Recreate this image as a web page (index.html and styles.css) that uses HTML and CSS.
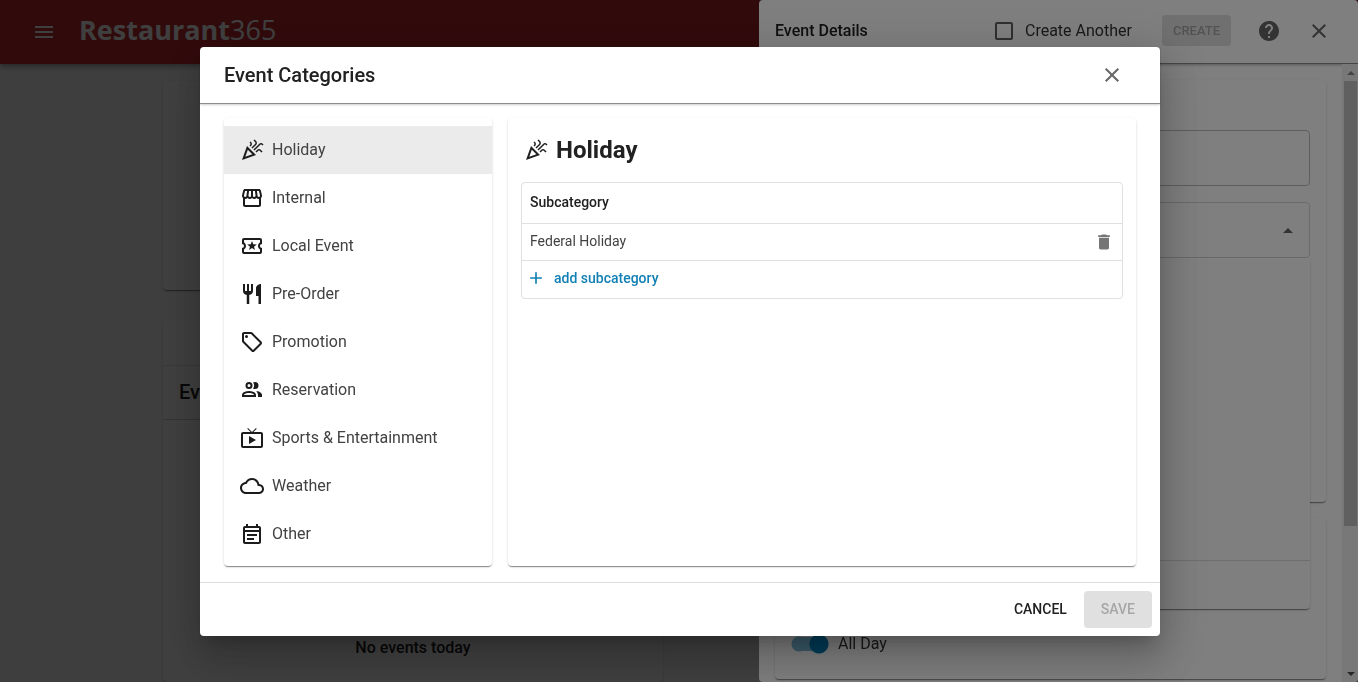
FILE: index.html
```html
<!DOCTYPE html>
<html lang="en">
<head>
<meta charset="utf-8">
<title>Restaurant365 - Event Categories</title>
<link rel="stylesheet" href="styles.css">
</head>
<body>
<svg class="sprite" aria-hidden="true">
  <symbol id="celebration" viewBox="0 0 24 24"><path d="M2 22l14-5-9-9L2 22zm10.35-5.82L5.3 18.7l2.52-7.05 4.53 4.53zM14.53 12.53l5.59-5.59c.49-.49 1.28-.49 1.77 0l.59.59 1.06-1.06-.59-.59c-1.07-1.07-2.82-1.07-3.89 0l-5.59 5.59 1.06 1.06zM10.06 6.88l-.59.59 1.06 1.06.59-.59c1.07-1.07 1.07-2.82 0-3.89l-.59-.59-1.06 1.07.59.59c.48.48.48 1.28 0 1.76zM17.06 11.88l-1.59 1.59 1.06 1.06 1.59-1.59c.49-.49 1.28-.49 1.77 0l1.61 1.61 1.06-1.06-1.61-1.61c-1.08-1.07-2.82-1.07-3.89 0zM15.06 5.88l-3.59 3.59 1.06 1.06 3.59-3.59c1.07-1.07 1.07-2.82 0-3.89l-1.59-1.59-1.06 1.06 1.59 1.59c.48.49.48 1.29 0 1.77z"/></symbol>
  <symbol id="store" viewBox="0 0 24 24"><path d="M21.9 8.89l-1.05-4.37c-.22-.9-1-1.52-1.91-1.52H5.05c-.9 0-1.69.63-1.9 1.52L2.1 8.89c-.24 1.02-.02 2.06.62 2.88.08.11.19.19.28.29V19c0 1.1.9 2 2 2h14c1.1 0 2-.9 2-2v-6.94c.09-.09.2-.18.28-.28.64-.82.87-1.87.62-2.89zm-2.99-3.9l1.05 4.37c.1.42.01.84-.25 1.17-.14.18-.44.47-.94.47-.61 0-1.14-.49-1.21-1.14L16.98 5l1.93-.01zM13 5h1.96l.54 4.52c.05.39-.07.78-.33 1.07-.22.26-.54.41-.95.41-.67 0-1.22-.59-1.22-1.31V5zM8.49 9.52L9.04 5H11v4.69c0 .72-.55 1.31-1.29 1.31-.34 0-.65-.15-.89-.41-.25-.29-.37-.68-.33-1.07zm-4.45-.16L5.05 5h1.97l-.58 4.86c-.08.65-.6 1.14-1.21 1.14-.49 0-.8-.29-.93-.47-.27-.32-.36-.75-.26-1.17zM5 19v-6.03c.08.01.15.03.23.03.87 0 1.66-.36 2.24-.95.6.6 1.4.95 2.31.95.87 0 1.65-.36 2.23-.93.59.57 1.39.93 2.29.93.84 0 1.64-.35 2.24-.95.58.59 1.37.95 2.24.95.08 0 .15-.02.23-.03V19H5z"/></symbol>
  <symbol id="ticket" viewBox="0 0 24 24"><path d="M22 10V6c0-1.11-.9-2-2-2H4c-1.1 0-1.99.89-1.99 2v4c1.1 0 1.99.9 1.99 2s-.89 2-2 2v4c0 1.1.9 2 2 2h16c1.1 0 2-.9 2-2v-4c-1.1 0-2-.9-2-2s.9-2 2-2zm-2-1.46c-1.19.69-2 1.99-2 3.46s.81 2.77 2 3.46V18H4v-2.54c1.19-.69 2-1.99 2-3.46 0-1.48-.8-2.77-1.99-3.46L4 6h16v2.54zM9.07 16L12 14.12 14.93 16l-.89-3.36 2.69-2.2-3.47-.21L12 7l-1.27 3.22-3.47.21 2.69 2.2z"/></symbol>
  <symbol id="utensils" viewBox="0 0 24 24"><path d="M11 9H9V2H7v7H5V2H3v7c0 2.12 1.66 3.84 3.75 3.97V22h2.5v-9.03C11.34 12.84 13 11.12 13 9V2h-2v7zm5-3v8h2.5v8H21V2c-2.76 0-5 2.24-5 4z"/></symbol>
  <symbol id="tag" viewBox="0 0 24 24"><path d="M21.41 11.58l-9-9C12.05 2.22 11.55 2 11 2H4c-1.1 0-2 .9-2 2v7c0 .55.22 1.05.59 1.42l9 9c.36.36.86.58 1.41.58s1.05-.22 1.41-.59l7-7c.37-.36.59-.86.59-1.41s-.23-1.06-.59-1.42zM13 20.01L4 11V4h7v-.01l9 9-7 7.02z"/><circle cx="6.5" cy="6.5" r="1.5"/></symbol>
  <symbol id="people" viewBox="0 0 24 24"><path d="M13.07 10.41A5 5 0 0 0 13.07 4.59A3.39 3.39 0 0 1 15 4A3.5 3.5 0 0 1 15 11A3.39 3.39 0 0 1 13.07 10.41M5.5 7.5A3.5 3.5 0 1 1 9 11A3.5 3.5 0 0 1 5.5 7.5M7.5 7.5A1.5 1.5 0 1 0 9 6A1.5 1.5 0 0 0 7.5 7.5M16 17V19H2V17S2 13 9 13 16 17 16 17M14 17C13.86 16.22 12.67 15 9 15S4.07 16.31 4 17M15.95 13A5.32 5.32 0 0 1 18 17V19H22V17S22 13.37 15.94 13Z"/></symbol>
  <symbol id="tv" viewBox="0 0 24 24"><path d="M21 6h-7.59l3.29-3.29L16 2l-4 4-4-4-.7.71L10.59 6H3c-1.1 0-2 .89-2 2v12c0 1.1.9 2 2 2h18c1.1 0 2-.9 2-2V8c0-1.11-.9-2-2-2zm0 14H3V8h18v12zM9 10v8l7-4z"/></symbol>
  <symbol id="cloud" viewBox="0 0 24 24"><path d="M19.35 10.04C18.67 6.59 15.64 4 12 4 9.11 4 6.6 5.64 5.35 8.04 2.34 8.36 0 10.91 0 14c0 3.31 2.69 6 6 6h13c2.76 0 5-2.24 5-5 0-2.64-2.05-4.78-4.65-4.96zM19 18H6c-2.21 0-4-1.79-4-4 0-2.05 1.53-3.76 3.56-3.97l1.07-.11.5-.95C8.08 7.14 9.94 6 12 6c2.62 0 4.88 1.86 5.39 4.43l.3 1.5 1.53.11c1.56.1 2.78 1.41 2.78 2.96 0 1.65-1.35 3-3 3z"/></symbol>
  <symbol id="note" viewBox="0 0 24 24"><path d="M19 4h-1V2h-2v2H8V2H6v2H5c-1.11 0-1.99.9-1.99 2L3 20c0 1.1.89 2 2 2h14c1.1 0 2-.9 2-2V6c0-1.1-.9-2-2-2zm0 16H5V10h14v10zm0-12H5V6h14v2zM7 12h10v2H7zm0 4h7v2H7z"/></symbol>
  <symbol id="close" viewBox="0 0 24 24"><path d="M19 6.41L17.59 5 12 10.59 6.41 5 5 6.41 10.59 12 5 17.59 6.41 19 12 13.41 17.59 19 19 17.59 13.41 12z"/></symbol>
  <symbol id="menu" viewBox="0 0 24 24"><path d="M3 18h18v-2H3v2zm0-5h18v-2H3v2zm0-7v2h18V6H3z"/></symbol>
  <symbol id="help" viewBox="0 0 24 24"><path d="M12 2C6.48 2 2 6.48 2 12s4.48 10 10 10 10-4.48 10-10S17.52 2 12 2zm1 17h-2v-2h2v2zm2.07-7.75l-.9.92C13.45 12.9 13 13.5 13 15h-2v-.5c0-1.1.45-2.1 1.17-2.83l1.24-1.26c.37-.36.59-.86.59-1.41 0-1.1-.9-2-2-2s-2 .9-2 2H8c0-2.21 1.79-4 4-4s4 1.79 4 4c0 .88-.36 1.68-.93 2.25z"/></symbol>
  <symbol id="trash" viewBox="0 0 24 24"><path d="M6 19c0 1.1.9 2 2 2h8c1.1 0 2-.9 2-2V7H6v12zM19 4h-3.5l-1-1h-5l-1 1H5v2h14V4z"/></symbol>
  <symbol id="plus" viewBox="0 0 24 24"><path d="M19 13h-6v6h-2v-6H5v-2h6V5h2v6h6v2z"/></symbol>
</svg>

<div class="app">
  <header class="topbar">
    <button class="icon-btn" aria-label="Menu"><svg class="icon"><use href="#menu"/></svg></button>
    <div class="logo"><b>Restaurant</b><span>365</span></div>
  </header>
  <main class="page">
    <div class="column">
      <section class="card summary"></section>
      <section class="card events">
        <div class="events-tools"></div>
        <h2 class="events-title">Events</h2>
        <p class="events-empty">No events today</p>
      </section>
    </div>
  </main>
</div>

<div class="scrim scrim-drawer">
  <aside class="drawer" aria-label="Event Details">
    <header class="drawer-head">
      <h2>Event Details</h2>
      <label class="check"><input type="checkbox">Create Another</label>
      <button class="btn btn-small" disabled>CREATE</button>
      <button class="icon-btn help" aria-label="Help"><svg class="icon"><use href="#help"/></svg></button>
      <button class="icon-btn" aria-label="Close details"><svg class="icon"><use href="#close"/></svg></button>
    </header>
    <div class="drawer-body">
      <form class="drawer-form">
        <section class="card details">
          <input class="field" type="text" aria-label="Name">
          <div class="picker">
            <button class="field field-open" type="button" aria-label="Category" aria-expanded="true"><i class="arrow-up"></i></button>
            <div class="picker-menu"><div class="picker-foot"></div></div>
          </div>
        </section>
        <section class="card schedule">
          <label class="switch"><input type="checkbox" role="switch" checked>All Day</label>
        </section>
      </form>
      <div class="scrollbar">
        <i class="scroll-arrow up"></i>
        <div class="thumb"></div>
        <i class="scroll-arrow down"></i>
      </div>
    </div>
  </aside>
</div>

<div class="scrim scrim-modal">
  <div class="modal" role="dialog" aria-modal="true" aria-labelledby="modal-title">
    <header class="modal-head">
      <h1 id="modal-title">Event Categories</h1>
      <button class="icon-btn" aria-label="Close"><svg class="icon"><use href="#close"/></svg></button>
    </header>
    <div class="modal-body">
      <nav class="card categories">
        <button class="category selected"><svg class="icon"><use href="#celebration"/></svg>Holiday</button>
        <button class="category"><svg class="icon"><use href="#store"/></svg>Internal</button>
        <button class="category"><svg class="icon"><use href="#ticket"/></svg>Local Event</button>
        <button class="category"><svg class="icon"><use href="#utensils"/></svg>Pre-Order</button>
        <button class="category"><svg class="icon"><use href="#tag"/></svg>Promotion</button>
        <button class="category"><svg class="icon"><use href="#people"/></svg>Reservation</button>
        <button class="category"><svg class="icon"><use href="#tv"/></svg>Sports &amp; Entertainment</button>
        <button class="category"><svg class="icon"><use href="#cloud"/></svg>Weather</button>
        <button class="category"><svg class="icon"><use href="#note"/></svg>Other</button>
      </nav>
      <section class="card panel">
        <h2 class="panel-title"><svg class="icon"><use href="#celebration"/></svg>Holiday</h2>
        <div class="table-frame">
          <table class="subcategories">
            <thead><tr><th scope="col" colspan="2">Subcategory</th></tr></thead>
            <tbody>
              <tr>
                <td>Federal Holiday</td>
                <td class="cell-action"><button class="icon-btn small" aria-label="Delete Federal Holiday"><svg class="icon"><use href="#trash"/></svg></button></td>
              </tr>
              <tr><td colspan="2"><button class="add small"><svg class="icon"><use href="#plus"/></svg>add subcategory</button></td></tr>
            </tbody>
          </table>
        </div>
      </section>
    </div>
    <footer class="modal-foot">
      <button class="btn btn-text">CANCEL</button>
      <button class="btn" disabled>SAVE</button>
    </footer>
  </div>
</div>
</body>
</html>
```

FILE: styles.css
```css
* { box-sizing: border-box; }
body {
  margin: 0;
  font: 400 16px/24px Roboto, "Liberation Sans", sans-serif;
  color: #212121;
  overflow: hidden;
}
h1, h2, p { margin: 0; }
button, input { font: inherit; color: inherit; }
button { border: 0; padding: 0; background: none; cursor: pointer; }
.sprite { display: none; }
.icon { width: 24px; height: 24px; fill: currentColor; flex: none; display: block; }
.icon-btn { display: flex; align-items: center; justify-content: center; }
.card {
  background: #fff;
  border-radius: 4px;
  box-shadow: 0 2px 1px -1px rgba(0,0,0,.3), 0 1px 1px rgba(0,0,0,.16), 0 1px 3px rgba(0,0,0,.12);
}

/* Application behind the overlays */
.app { height: 100vh; display: flex; flex-direction: column; background: #fafafa; overflow: hidden; isolation: isolate; }
.topbar {
  flex: none;
  height: 64px;
  padding: 0 32px;
  display: flex;
  align-items: center;
  gap: 23px;
  background: #c4282e;
  color: #fff;
  box-shadow: 0 2px 4px -1px rgba(0,0,0,.2), 0 4px 5px rgba(0,0,0,.14), 0 1px 10px rgba(0,0,0,.12);
  z-index: 1;
}
.logo { font: 400 27px/32px "Open Sans", sans-serif; padding-bottom: 4px; }
.logo b { font-weight: 700; }
.logo span { font-weight: 400; }
.page { flex: 1; width: 1032px; max-width: 100%; margin: 0 auto; padding-top: 17px; }
.column { width: 500px; display: flex; flex-direction: column; gap: 28px; height: 100%; }
.summary { height: 209px; flex: none; }
.events { flex: 1; display: flex; flex-direction: column; }
.events-tools { height: 48px; border-bottom: 1px solid #e0e0e0; }
.events-title { font-size: 20px; line-height: 53px; font-weight: 500; padding: 0 16px; border-bottom: 1px solid #d0d0d0; }
.events-empty { margin: auto 0 22px; text-align: center; font-weight: 500; }

.scrim { position: fixed; inset: 0; background: rgba(0,0,0,.5); display: flex; }

/* Event details drawer */
.scrim-drawer { justify-content: flex-end; }
.drawer { width: 599px; max-width: 100%; background: #fff; border-radius: 4px; display: flex; flex-direction: column; overflow: hidden; }
.drawer-head {
  height: 64px;
  flex: none;
  padding: 0 27px 2px 16px;
  display: flex;
  align-items: center;
  border-bottom: 1px solid #8c8c8c;
  box-shadow: 0 1px 3px rgba(0,0,0,.3);
}
.drawer-head h2 { font-size: 16px; font-weight: 500; margin-right: auto; }
.drawer-head .icon-btn { color: #666; }
.drawer-head .help { margin: 0 26px; }
.check { display: flex; align-items: center; gap: 12px; color: #333; margin-right: 30px; }
.check input { appearance: none; width: 18px; height: 18px; margin: 0; border: 2px solid #616161; border-radius: 2px; }
.drawer-body { flex: 1; display: flex; min-height: 0; }
.drawer-form { flex: 1; padding: 16px 16px 3px; display: flex; flex-direction: column; gap: 16px; }
.details { flex: 1; padding: 50px 16px 16px; display: flex; flex-direction: column; gap: 16px; }
.field { width: 100%; height: 56px; border: 1px solid #bdbdbd; border-radius: 4px; padding: 0 16px; background: #fff; }
.field-open { display: flex; justify-content: flex-end; align-items: center; border-color: #d5d5d5; }
.arrow-up { border: 5px solid transparent; border-top: 0; border-bottom-color: #666; }
.picker { position: relative; }
.picker-menu {
  position: absolute;
  top: 100%;
  left: 0;
  right: 0;
  height: 351px;
  display: flex;
  align-items: flex-end;
  background: #fff;
  border-radius: 4px;
  box-shadow: 0 2px 1px -1px rgba(0,0,0,.3), 0 1px 1px rgba(0,0,0,.16), 0 1px 3px rgba(0,0,0,.12);
}
.picker-foot { flex: 1; height: 49px; border-top: 1px solid #ddd; }
.schedule { height: 161px; display: flex; align-items: flex-end; padding: 0 16px 23px; }
.switch { display: flex; align-items: center; gap: 8px; color: #333; }
.switch input {
  appearance: none;
  width: 39px;
  height: 20px;
  margin: 0;
  border-radius: 10px;
  background:
    radial-gradient(circle at 28px 10px, #017ab3 9px, transparent 10px),
    linear-gradient(#79b8d6, #79b8d6) 8px 3px / 20px 14px no-repeat,
    radial-gradient(circle at 8px 10px, #79b8d6 7px, transparent 8px);
}
.scrollbar { width: 16px; background: #f1f1f1; display: flex; flex-direction: column; align-items: center; padding: 7px 1px 6px 2px; }
.scroll-arrow { border: 4px solid transparent; }
.scroll-arrow.up { border-top: 0; border-bottom-color: #888; }
.scroll-arrow.down { border-bottom: 0; border-top-color: #505050; margin-top: auto; }
.thumb { width: 100%; height: 73.5%; margin-top: 6px; background: #c1c1c1; }

/* Event categories dialog */
.scrim-modal { justify-content: center; align-items: flex-start; padding: 47px 0 0 2px; }
.modal {
  width: 960px;
  max-width: 92vw;
  background: #fff;
  border-radius: 4px;
  box-shadow: 0 11px 15px -7px rgba(0,0,0,.2), 0 24px 38px 3px rgba(0,0,0,.14), 0 9px 46px 8px rgba(0,0,0,.12);
}
.modal-head {
  display: flex;
  align-items: center;
  justify-content: space-between;
  height: 57px;
  padding: 0 36px 0 24px;
  border-bottom: 1px solid #8c8c8c;
  box-shadow: 0 1px 2px rgba(0,0,0,.2);
}
.modal-head h1 { font-size: 20px; font-weight: 500; }
.modal-head .icon-btn { color: #666; }
.modal-body { display: grid; grid-template-columns: 268px 1fr; gap: 16px; padding: 14px 24px 16px; }
.categories { padding: 8px 0; display: flex; flex-direction: column; }
.category { height: 48px; padding: 0 16px; display: flex; align-items: center; gap: 8px; text-align: left; color: #424242; }
.category .icon { color: #1c1c1c; }
.category.selected { background: #ebebeb; }
.panel { padding: 16px 13px; }
.panel-title { display: flex; align-items: center; gap: 8px; padding-left: 3px; font-size: 24px; line-height: 32px; font-weight: 700; }
.table-frame { margin-top: 16px; border: 1px solid #e0e0e0; border-radius: 4px; }
.subcategories { width: 100%; border-collapse: collapse; font-size: 14px; line-height: 20px; }
.subcategories th, .subcategories td { height: 37px; padding: 0 8px 2px; text-align: left; color: #424242; }
.subcategories th { height: 40px; font-weight: 500; color: #212121; }
.subcategories td { border-top: 1px solid #e0e0e0; }
.subcategories tr:last-child td { height: 38px; }
.subcategories .cell-action { width: 36px; padding-bottom: 0; }
.small .icon { width: 20px; height: 20px; }
.icon-btn.small { color: #757575; }
.add { display: flex; align-items: center; gap: 8px; margin-left: -4px; font-weight: 500; color: #1280b4; }
.modal-foot { display: flex; justify-content: flex-end; padding: 8px; border-top: 1px solid #ddd; }
.btn { height: 37px; padding: 0 17px 2px; border-radius: 4px; font-size: 14px; font-weight: 500; }
.btn:disabled { background: #e0e0e0; color: #a6a6a6; cursor: default; }
.btn-small { height: 31px; padding: 0 11px; font-size: 13px; }
```
